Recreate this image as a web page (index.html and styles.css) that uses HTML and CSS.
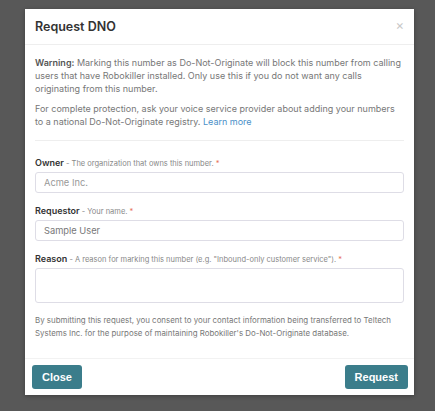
FILE: index.html
```html
<!DOCTYPE html>
<html lang="en">
<head>
    <meta charset="UTF-8">
    <meta name="viewport" content="width=device-width, initial-scale=1.0">
    <title>Request DNO</title>
    <link rel="stylesheet" href="styles.css">
</head>
<body>
    <div class="backdrop">
        <div class="modal">
            <div class="modal-header">
                <h2>Request DNO</h2>
                <span class="close-x">&times;</span>
            </div>

            <div class="modal-body">
                <p><strong>Warning:</strong> Marking this number as Do-Not-Originate will block this number from calling users that have Robokiller installed. Only use this if you do not want any calls originating from this number.</p>
                <p>For complete protection, ask your voice service provider about adding your numbers to a national Do-Not-Originate registry. <a href="#">Learn more</a></p>

                <div class="form">
                    <label for="owner"><b>Owner</b> - The organization that owns this number. <span class="req">*</span></label>
                    <input type="text" id="owner" placeholder="Acme Inc.">

                    <label for="requestor"><b>Requestor</b> - Your name. <span class="req">*</span></label>
                    <input type="text" id="requestor" value="Sample User">

                    <label for="reason"><b>Reason</b> - A reason for marking this number (e.g. "Inbound-only customer service"). <span class="req">*</span></label>
                    <textarea id="reason"></textarea>

                    <p class="consent">By submitting this request, you consent to your contact information being transferred to Teltech Systems Inc. for the purpose of maintaining Robokiller's Do-Not-Originate database.</p>
                </div>
            </div>

            <div class="modal-footer">
                <button>Close</button>
                <button>Request</button>
            </div>
        </div>
    </div>
</body>
</html>
```

FILE: styles.css
```css
html, body {
    margin: 0;
    height: 100%;
}
body {
    font-family: Inter, 'Noto Sans', sans-serif;
    background: #585858;
}
.backdrop {
    padding: 9px 21px 15px 25px;
}
.modal {
    background: white;
    width: 389px;
    box-shadow: 0 1px 4px rgba(0,0,0,0.3);
}
.modal-header {
    display: flex;
    justify-content: space-between;
    align-items: center;
    height: 35px;
    padding: 0 10px;
    border-bottom: 1px solid #eee;
}
.modal-header h2 {
    margin: 0;
    font-size: 12.5px;
    font-weight: 600;
    color: #333;
}
.close-x {
    color: #c8c8c8;
    font-size: 13px;
    margin-top: -4px;
}
.modal-body {
    padding: 11px 10px 0 10px;
    font-size: 9px;
    line-height: 13px;
    color: #777;
}
.modal-body p {
    margin: 0 0 7px 0;
}
.modal-body strong {
    color: #555;
    font-weight: 600;
}
.modal-body a {
    color: #4a90c8;
    text-decoration: none;
}
.form {
    margin-top: 12px;
    padding-top: 15px;
    border-top: 1px solid #eee;
}
.form label {
    display: block;
    font-size: 7.5px;
    color: #888;
    margin-bottom: 2px;
}
.form label b {
    font-size: 9px;
    color: #333;
    font-weight: 600;
}
.req {
    color: #e8735a;
}
.form input, .form textarea {
    display: block;
    box-sizing: border-box;
    width: 100%;
    height: 21px;
    padding: 0 8px;
    border: 1px solid #dedde6;
    border-radius: 3px;
    font-family: inherit;
    font-size: 9.3px;
    color: #777;
    margin-bottom: 11px;
}
.form input::placeholder {
    color: #999;
}
.form textarea {
    height: 35px;
    resize: none;
    margin-bottom: 11px;
}
.form .consent {
    font-size: 7.9px;
    color: #777;
    margin-bottom: 0;
    padding-bottom: 18px;
}
.modal-footer {
    display: flex;
    justify-content: space-between;
    padding: 6px 6px 6px 7px;
    border-top: 1px solid #f2f2f2;
}
.modal-footer button {
    background: #3b7d8b;
    color: white;
    border: none;
    border-radius: 3px;
    height: 24px;
    padding: 0 10px;
    font-family: 'Liberation Sans', Arial, sans-serif;
    font-weight: bold;
    font-size: 11px;
}
```
